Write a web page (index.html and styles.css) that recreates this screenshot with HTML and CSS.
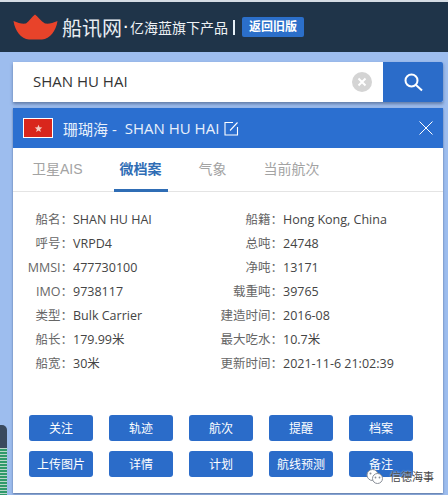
FILE: index.html
```html
<!DOCTYPE html>
<html lang="zh">
<head>
  <meta charset="UTF-8" />
  <title>船讯网</title>
  <link rel="stylesheet" href="styles.css">
</head>
<body>
  <div class="kopf">
    <svg class="logo" width="45" height="26" viewBox="0 0 45 26">
      <path d="M0.5 7 C5 9 9 10 13 9.5 C16 7 19 3 22 0.5 C25 3 28 7 32 9.5 C36 10 40 9 44.5 7 C43 17 37 25 29 25.5 L16 25.5 C8 25 2 17 0.5 7 Z" fill="#e8432a"/>
    </svg>
    <span class="marke">船讯网</span>
    <span class="punkt">·</span>
    <span class="slogan">亿海蓝旗下产品</span>
    <span class="strich"></span>
    <span class="altversion">返回旧版</span>
  </div>

  <div class="inhalt">
    <div class="seitenleiste">
      <div class="legende"></div>
    </div>
    <div class="spalte">
      <div class="suche">
        <div class="suchfeld">
          <span class="suchtext">SHAN HU HAI</span>
          <span class="loeschen">
            <svg width="10" height="10" viewBox="0 0 10 10"><path d="M1.5 1.5 L8.5 8.5 M8.5 1.5 L1.5 8.5" stroke="#fff" stroke-width="2"/></svg>
          </span>
        </div>
        <div class="suchknopf">
          <svg width="19" height="19" viewBox="0 0 19 19" fill="none" stroke="#fff" stroke-width="2"><circle cx="7.5" cy="7.5" r="6"/><path d="M12 12 L18 17.5"/></svg>
        </div>
      </div>

      <div class="karte">
        <div class="kartenkopf">
          <span class="flagge">
            <svg width="9" height="9" viewBox="0 0 12 12"><path d="M6 1 L7.4 4.4 L11 4.6 L8.2 7 L9.1 10.6 L6 8.6 L2.9 10.6 L3.8 7 L1 4.6 L4.6 4.4 Z" fill="#f4c9c0"/></svg>
          </span>
          <span class="schiffsname">珊瑚海 -</span>
          <span class="schiffsname">SHAN HU HAI</span>
          <svg class="bearbeiten" width="15" height="15" viewBox="0 0 15 15" fill="none" stroke="#fff" stroke-width="1.1"><path d="M9 1.5 H1 V14 H13.5 V6"/><path d="M6 9.5 L13.5 1.5"/></svg>
          <svg class="schliessen" width="14" height="14" viewBox="0 0 14 14" fill="none" stroke="#fff" stroke-width="1"><path d="M0.5 0.5 L13.5 13.5 M13.5 0.5 L0.5 13.5"/></svg>
        </div>

        <div class="tabs">
          <span class="tab">卫星AIS</span>
          <span class="tab aktiv">微档案</span>
          <span class="tab">气象</span>
          <span class="tab">当前航次</span>
        </div>

        <div class="daten">
          <div class="datenspalte links">
            <div class="zeile"><span class="name">船名：</span><span>SHAN HU HAI</span></div>
            <div class="zeile"><span class="name">呼号：</span><span>VRPD4</span></div>
            <div class="zeile"><span class="name">MMSI：</span><span>477730100</span></div>
            <div class="zeile"><span class="name">IMO：</span><span>9738117</span></div>
            <div class="zeile"><span class="name">类型：</span><span>Bulk Carrier</span></div>
            <div class="zeile"><span class="name">船长：</span><span>179.99米</span></div>
            <div class="zeile"><span class="name">船宽：</span><span>30米</span></div>
          </div>
          <div class="datenspalte rechts">
            <div class="zeile"><span class="name">船籍：</span><span>Hong Kong, China</span></div>
            <div class="zeile"><span class="name">总吨：</span><span>24748</span></div>
            <div class="zeile"><span class="name">净吨：</span><span>13171</span></div>
            <div class="zeile"><span class="name">载重吨：</span><span>39765</span></div>
            <div class="zeile"><span class="name">建造时间：</span><span>2016-08</span></div>
            <div class="zeile"><span class="name">最大吃水：</span><span>10.7米</span></div>
            <div class="zeile"><span class="name">更新时间：</span><span>2021-11-6 21:02:39</span></div>
          </div>
        </div>

        <div class="knoepfe">
          <button class="knopf">关注</button>
          <button class="knopf">轨迹</button>
          <button class="knopf">航次</button>
          <button class="knopf">提醒</button>
          <button class="knopf">档案</button>
          <button class="knopf">上传图片</button>
          <button class="knopf">详情</button>
          <button class="knopf">计划</button>
          <button class="knopf">航线预测</button>
          <button class="knopf">备注</button>
        </div>
      </div>
    </div>
  </div>

  <div class="wasserzeichen">
    <svg width="18" height="15" viewBox="0 0 18 15">
      <circle cx="6.5" cy="6" r="5.5" fill="#fff" stroke="#8a8f98"/>
      <circle cx="11.5" cy="9.5" r="5" fill="#fff" stroke="#8a8f98"/>
      <circle cx="4.5" cy="4.5" r="1" fill="#8a8f98"/>
      <circle cx="9.5" cy="8.5" r="0.9" fill="#8a8f98"/>
      <circle cx="13.5" cy="8.5" r="0.9" fill="#8a8f98"/>
    </svg>
    <span>信德海事</span>
  </div>
</body>
</html>
```

FILE: styles.css
```css
* {
  box-sizing: border-box;
}

body {
  font-family: "Liberation Sans", "Noto Sans CJK SC", sans-serif;
  background: #9dbdee;
  margin: 0;
  width: 448px;
  height: 495px;
  overflow: hidden;
  position: relative;
  color: #333;
}

.kopf {
  display: flex;
  align-items: center;
  height: 50px;
  margin-top: 2px;
  padding-left: 13px;
  background: #1f3449;
  color: #fff;
  box-shadow: 0 -2px 0 #d5dce4;
}

.logo {
  margin: 0 4px 1px 0;
}

.marke {
  font-size: 20px;
  color: #e8edf2;
}

.punkt {
  width: 8px;
  text-align: center;
  font-size: 14px;
  font-weight: bold;
}

.slogan {
  font-size: 14px;
  color: #eef2f5;
}

.strich {
  width: 2px;
  height: 15px;
  margin: 0 7px 0 5px;
  background: #e6f0f8;
}

.altversion {
  width: 62px;
  height: 20px;
  line-height: 20px;
  text-align: center;
  font-size: 12px;
  font-weight: bold;
  border-radius: 2px;
  background: #2b6fca;
}

.inhalt {
  display: flex;
}

.seitenleiste {
  width: 13px;
  flex: none;
  position: relative;
}

.legende {
  position: absolute;
  left: 0;
  top: 373px;
  width: 7px;
  height: 70px;
  border-radius: 0 5px 0 0;
  background: linear-gradient(#3a4a5e 0 23px, transparent 23px), repeating-linear-gradient(#2f9a6c 0 2px, #b9d6c8 2px 3px);
}

.spalte {
  width: 430px;
  padding-top: 10px;
}

.suche {
  display: flex;
  height: 40px;
  box-shadow: 0 2px 3px rgba(40, 60, 100, 0.5);
}

.suchfeld {
  flex: 1;
  display: flex;
  align-items: center;
  justify-content: space-between;
  padding: 0 11px 0 20px;
  background: #fff;
}

.suchtext {
  margin-bottom: 2px;
  font-family: "Open Sans", "Liberation Sans", sans-serif;
  font-size: 15px;
  color: #333;
}

.loeschen {
  width: 20px;
  height: 20px;
  display: flex;
  align-items: center;
  justify-content: center;
  border-radius: 50%;
  background: #d4d4d4;
}

.suchknopf {
  width: 60px;
  display: flex;
  align-items: center;
  justify-content: center;
  background: #2b6cc9;
  border-radius: 0 2px 2px 0;
}

.karte {
  margin-top: 6px;
  height: 385px;
  background: #fff;
  box-shadow: 0 1px 2px rgba(40, 60, 100, 0.6);
}

.kartenkopf {
  display: flex;
  align-items: center;
  height: 40px;
  padding: 0 10px;
  background: #2b6fd0;
  color: #e8f0fb;
  font-family: "Open Sans", "Liberation Sans", "Noto Sans CJK SC", sans-serif;
  font-size: 15px;
}

.flagge {
  width: 30px;
  height: 20px;
  margin-right: 10px;
  display: flex;
  align-items: center;
  justify-content: center;
  background: #d9261c;
  border: 1px solid #fff;
}

.schiffsname {
  margin-right: 8px;
}

.bearbeiten {
  margin-left: -3px;
}

.schliessen {
  margin-left: auto;
}

.tabs {
  display: flex;
  gap: 25px;
  height: 44px;
  padding-left: 13px;
  border-bottom: 1px solid #e4e4e4;
}

.tab {
  padding: 0 6px;
  line-height: 43px;
  height: 44px;
  white-space: nowrap;
  font-size: 14px;
  color: #a3a3a3;
}

.tab.aktiv {
  color: #2f6db5;
  font-weight: bold;
  border-bottom: 3px solid #2f6db5;
}

.daten {
  display: flex;
  padding-top: 16px;
  font-family: "Open Sans", "Liberation Sans", "Noto Sans CJK SC", sans-serif;
  font-size: 12.5px;
  color: #444;
}

.datenspalte {
  display: flex;
  flex-direction: column;
}

.links {
  width: 200px;
}

.zeile {
  display: flex;
  height: 24px;
  line-height: 24px;
  white-space: nowrap;
}

.name {
  flex: none;
  text-align: right;
  color: #666;
}

.links .name {
  width: 60px;
}

.rechts .name {
  width: 70px;
}

.knoepfe {
  display: grid;
  grid-template-columns: repeat(5, 64px);
  gap: 10px 16px;
  margin-top: 39px;
  padding-left: 16px;
}

.knopf {
  height: 26px;
  padding: 0 0 2px;
  border: none;
  border-radius: 3px;
  background: #2b6cc9;
  color: #fff;
  font-family: inherit;
  font-size: 12px;
  white-space: nowrap;
}

.wasserzeichen {
  position: absolute;
  left: 366px;
  top: 468px;
  display: flex;
  align-items: center;
  gap: 6px;
  font-size: 11px;
  color: #444;
  text-shadow: 0 0 2px #fff;
}
```
